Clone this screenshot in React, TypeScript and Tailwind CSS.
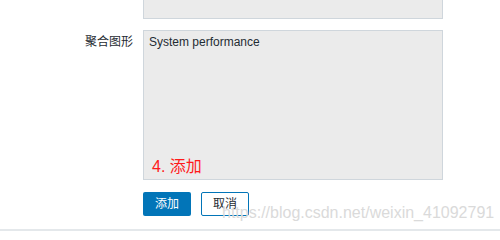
export default function App() {
  return (
    <div className="relative w-[500px] h-[232px] bg-white overflow-hidden font-['Liberation_Sans','Noto_Sans_CJK_SC',sans-serif] text-[12px] text-[#1f2c33]">
      <div className="flex">
        <div className="w-[133px] shrink-0" />
        <div className="ml-[10px] w-[300px] h-[20px] -mt-px bg-[#ebebeb] border border-[#cfd6dc]" />
      </div>
      <div className="flex mt-[11px]">
        <div className="w-[133px] shrink-0 text-right pt-[5px] leading-[14px]">聚合图形</div>
        <div className="ml-[10px] w-[300px] h-[150px] bg-[#ebebeb] border border-[#cfd6dc] flex flex-col justify-between px-[5px] pt-[4px] pb-[3px]">
          <div className="leading-[14px]">System performance</div>
          <div className="pl-[3px] text-[16px] leading-[18px] text-[#ff1a1a]">4. 添加</div>
        </div>
      </div>
      <div className="flex mt-[12px] ml-[143px] gap-[10px]">
        <button className="w-[48px] h-[24px] rounded-[2px] bg-[#0275b8] text-white text-[12px]">添加</button>
        <button className="w-[48px] h-[24px] rounded-[2px] border border-[#0275b8] bg-white text-[#1f2c33] text-[12px]">取消</button>
      </div>
      <div className="absolute left-[222px] top-[202px] text-[16px] leading-[22px] text-[#dadada] whitespace-nowrap">https://blog.csdn.net/weixin_41092791</div>
      <div className="absolute left-0 right-0 top-[229px] h-[2px] bg-[#e4e8eb]" />
    </div>
  );
}
